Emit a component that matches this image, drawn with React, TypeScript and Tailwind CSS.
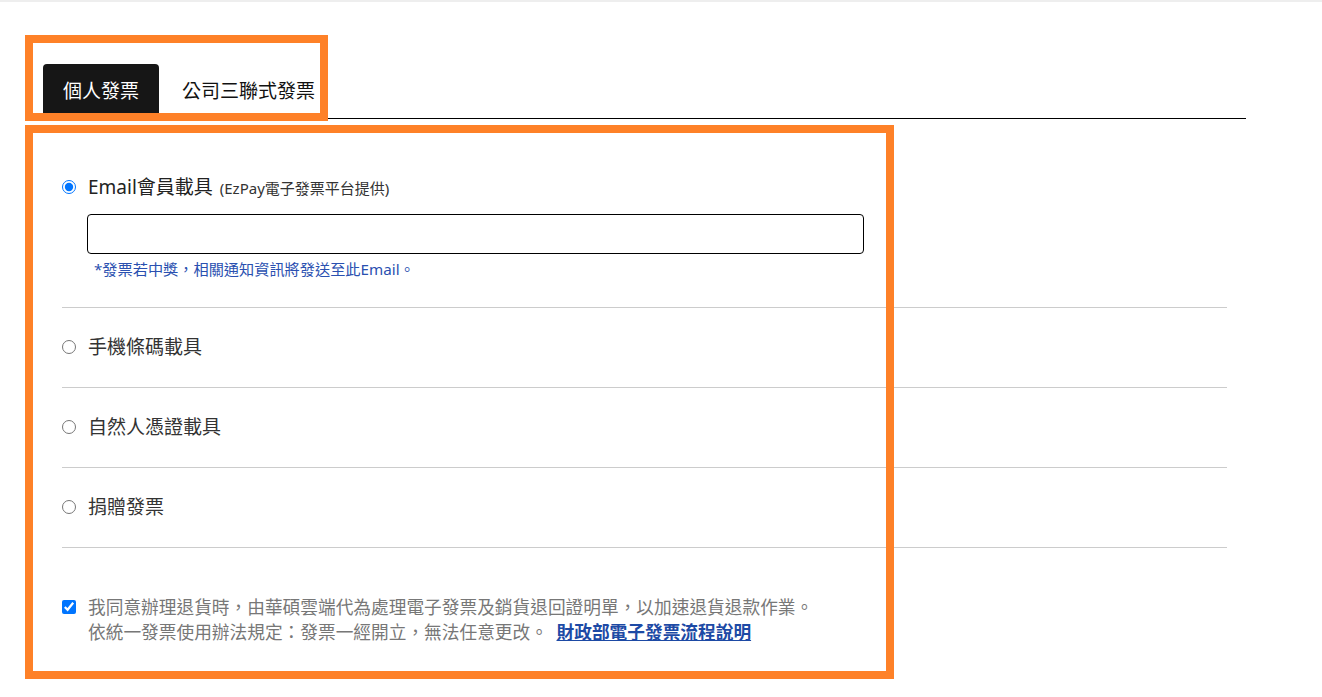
import React from "react";

const font = "font-['Noto_Sans','Noto_Sans_CJK_TC',sans-serif]";

function Row({ label }: { label: string }) {
  return (
    <div className="h-[80px] border-b border-[#cccccc] flex items-center">
      <label className="flex items-center gap-[12px] -mt-[2px]">
        <input type="radio" name="carrier" className="m-0 w-[14px] h-[14px]" />
        <span className="text-[19px] leading-[26px] text-[#333333]">{label}</span>
      </label>
    </div>
  );
}

export default function App() {
  return (
    <div className={`${font} relative w-[1322px] h-[697px] bg-white border-t-2 border-[#eeeeee] overflow-hidden`}>
      <div className="ml-[43px] w-[1203px] pt-[62px]">
        <div className="flex items-end border-b border-black h-[55px]">
          <div className="h-[54px] px-[20px] flex items-center rounded-t-[4px] bg-[#161616] text-white text-[19px]">
            個人發票
          </div>
          <div className="h-[54px] ml-[3px] px-[20px] flex items-center text-[#111111] text-[19px]">
            公司三聯式發票
          </div>
        </div>
        <div className="px-[19px]">
          <div className="border-b border-[#cccccc] pt-[55px] pb-[28px]">
            <label className="flex items-center gap-[12px] h-[26px]">
              <input type="radio" name="carrier" defaultChecked className="m-0 w-[14px] h-[14px]" />
              <span className="text-[19px] text-[#222222] leading-[26px]">
                Email會員載具{" "}
                <span className="ml-[2px] text-[15px] text-[#333333]">(EzPay電子發票平台提供)</span>
              </span>
            </label>
            <input
              type="text"
              className="block mt-[14px] ml-[25px] w-[777px] h-[40px] border border-black rounded-[4px] outline-none"
            />
            <div className="mt-[5px] ml-[32px] text-[15.2px] leading-[20px] text-[#2a50b0]">
              *發票若中獎，相關通知資訊將發送至此Email。
            </div>
          </div>
          <Row label="手機條碼載具" />
          <Row label="自然人憑證載具" />
          <Row label="捐贈發票" />
          <div className="mt-[47px] flex items-start gap-[12px]">
            <input type="checkbox" defaultChecked className="m-0 mt-[5px] w-[14px] h-[14px] shrink-0" />
            <p className="text-[17.7px] leading-[25px] text-[#777777]">
              我同意辦理退貨時，由華碩雲端代為處理電子發票及銷貨退回證明單，以加速退貨退款作業。
              <br />
              依統一發票使用辦法規定：發票一經開立，無法任意更改。{" "}
              <a href="#" className="ml-[4px] font-bold underline text-[#1d4aa5]">
                財政部電子發票流程說明
              </a>
            </p>
          </div>
        </div>
      </div>
      <div className="absolute left-[25px] top-[33px] w-[303px] h-[86px] border-[8px] border-[#fe8128] pointer-events-none" />
      <div className="absolute left-[25px] top-[123px] w-[869px] h-[554px] border-[8px] border-[#fe8128] pointer-events-none" />
    </div>
  );
}
